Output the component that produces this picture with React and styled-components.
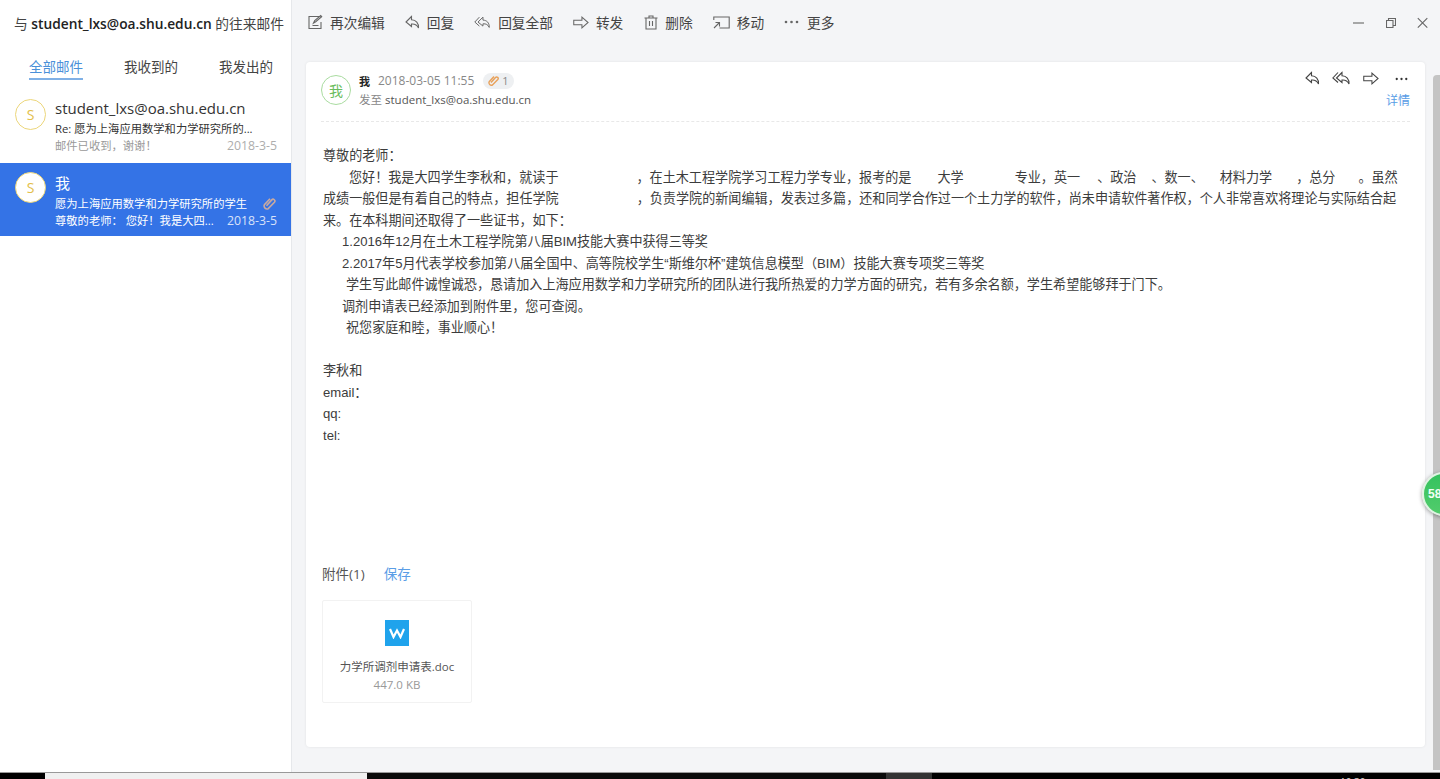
import styled, { createGlobalStyle } from "styled-components";

const GlobalStyle = createGlobalStyle`
    html, body {
        margin: 0;
        padding: 0;
        height: 100%;
        overflow: hidden;
        background: #f4f5f7;
    }
    body {
        font-family: "Open Sans", "Noto Sans CJK SC", sans-serif;
        color: #333;
    }
    * {
        box-sizing: border-box;
    }
`;

const Page = styled.div`
    position: relative;
    display: flex;
    flex-direction: column;
    width: 1440px;
    height: 779px;
    overflow: hidden;
`;

const Win = styled.div`
    display: flex;
    height: 772px;
`;

/* left column */
const Sidebar = styled.aside`
    width: 292px;
    flex-shrink: 0;
    background: #fff;
    border-right: 1px solid #e6e8eb;
`;

const SideTitle = styled.div`
    height: 46px;
    padding-left: 14px;
    display: flex;
    align-items: center;
    font-size: 13.75px;
    color: #444;
    white-space: pre;
    b {
        font-weight: 600;
        color: #222;
    }
`;

const Tabs = styled.div`
    display: flex;
    height: 44px;
    padding: 11px 0 0 29px;
    gap: 41px;
`;

const Tab = styled.div`
    height: 23px;
    font-size: 13.5px;
    line-height: 20px;
    color: ${(p) => (p.$active ? "#4a90d9" : "#444")};
    border-bottom: ${(p) => (p.$active ? "2px solid #7fb0e6" : "none")};
`;

const MailItem = styled.div`
    display: flex;
    height: 73px;
    padding: ${(p) => (p.$active ? "10px" : "8px")} 14px 0 15px;
    gap: 9px;
    background: ${(p) => (p.$active ? "#3473e6" : "#fff")};
    color: ${(p) => (p.$active ? "#fff" : "#333")};
`;

const SideAvatar = styled.div`
    width: 31px;
    height: 31px;
    margin-top: ${(p) => (p.$active ? "-1px" : "1px")};
    border-radius: 50%;
    border: 1px solid #ecd67a;
    background: #fff;
    color: #e3be4a;
    font-size: 14px;
    display: flex;
    align-items: center;
    justify-content: center;
    flex-shrink: 0;
`;

const MailText = styled.div`
    flex: 1;
    min-width: 0;
`;

const MailName = styled.div`
    height: 22px;
    font-size: 15px;
    line-height: 20px;
    white-space: nowrap;
`;

const MailRow = styled.div`
    display: flex;
    justify-content: space-between;
    align-items: center;
    height: 17px;
    font-size: 11.3px;
    line-height: 16px;
    white-space: nowrap;
    color: ${(p) => p.$color || "inherit"};
`;

const MailDate = styled.span`
    font-size: 12.3px;
    opacity: 0.8;
`;

/* right column */
const Main = styled.main`
    flex: 1;
    min-width: 0;
    display: flex;
    flex-direction: column;
`;

const Toolbar = styled.div`
    display: flex;
    align-items: flex-start;
    height: 62px;
    padding: 13px 12px 0 16px;
`;

const Actions = styled.div`
    display: flex;
    gap: 20px;
    flex: 1;
`;

const Action = styled.div`
    display: flex;
    align-items: center;
    gap: 7px;
    height: 18px;
    font-size: 13.7px;
    color: #444;
    white-space: nowrap;
    &:nth-child(5) {
        margin-left: 1px;
    }
    &:last-child {
        gap: 8px;
    }
`;

const WinControls = styled.div`
    display: flex;
    gap: 21px;
    padding-top: 3px;
`;

const Icon = styled.svg`
    display: block;
    flex-shrink: 0;
    fill: none;
    stroke: ${(p) => p.$stroke || "#666"};
    stroke-width: ${(p) => p.$weight || 1.1};
`;

const ContentRow = styled.div`
    display: flex;
    padding-left: 14px;
    gap: 8px;
    flex: 1;
`;

const Card = styled.section`
    flex: 1;
    height: 685px;
    padding: 0 15px;
    background: #fff;
    border-radius: 4px;
    box-shadow: 0 0 3px rgba(0, 0, 0, 0.08);
`;

const ScrollThumb = styled.div`
    width: 7px;
    height: 695px;
    margin-top: 13px;
    background: #c4c4c4;
    border-radius: 4px 0 0 0;
`;

const CardHead = styled.header`
    display: flex;
    height: 60px;
    padding-top: 10px;
    border-bottom: 1px dashed #e8e8e8;
`;

const BigAvatar = styled.div`
    width: 30px;
    height: 30px;
    margin-top: 3px;
    margin-right: 8px;
    border-radius: 50%;
    border: 1px solid #a9dca0;
    color: #6bbd5e;
    font-size: 14px;
    display: flex;
    align-items: center;
    justify-content: center;
    flex-shrink: 0;
`;

const HeadText = styled.div`
    flex: 1;
`;

const HeadLine = styled.div`
    display: flex;
    align-items: center;
    height: ${(p) => p.$h};
    font-size: ${(p) => p.$size};
    color: #888;
    white-space: nowrap;
`;

const Sender = styled.b`
    font-size: 11px;
    color: #222;
    margin-right: 8px;
`;

const Badge = styled.span`
    display: flex;
    align-items: center;
    gap: 2px;
    height: 16px;
    width: 31px;
    margin-left: 9px;
    padding-left: 5px;
    border-radius: 8px;
    background: #eef0f2;
    font-size: 11px;
    color: #888;
`;

const Address = styled.span`
    color: #555;
    margin-left: 3px;
`;

const HeadRight = styled.div`
    display: flex;
    flex-direction: column;
    align-items: flex-end;
`;

const HeadIcons = styled.div`
    display: flex;
    align-items: center;
    gap: 12px;
    height: 13px;
    & > :last-child {
        margin: 0 2px 0 4px;
    }
`;

const DetailLink = styled.a`
    margin-top: 8px;
    font-size: 12px;
    line-height: 16px;
    color: #5a9de6;
`;

const Letter = styled.article`
    padding: 23px 0 0 2px;
    height: 434px;
    font-family: "Liberation Sans", "Noto Sans CJK SC", sans-serif;
    font-size: 13.1px;
    line-height: 21.54px;
    color: #3c3c3c;
`;

const Line = styled.div`
    height: 21.54px;
    padding-left: ${(p) => p.$indent || 0}px;
    white-space: nowrap;
`;

const Blank = styled.span`
    display: inline-block;
    width: ${(p) => p.$w}px;
`;

const AttachHead = styled.div`
    display: flex;
    gap: 19px;
    height: 44px;
    padding: 8px 0 0 1px;
    font-size: 13.5px;
    line-height: 20px;
    color: #555;
`;

const SaveLink = styled.a`
    color: #5a9de6;
`;

const AttachCard = styled.div`
    width: 150px;
    height: 103px;
    margin-left: 1px;
    padding-top: 19px;
    display: flex;
    flex-direction: column;
    align-items: center;
    border: 1px solid #f2f2f2;
    border-radius: 2px;
`;

const WordIcon = styled.div`
    width: 24px;
    height: 26px;
    margin-bottom: 12px;
    background: #1fa3ec;
    display: flex;
    align-items: center;
    justify-content: center;
`;

const FileName = styled.div`
    font-size: 11.5px;
    line-height: 18px;
    color: #555;
`;

const FileSize = styled.div`
    font-size: 11.5px;
    line-height: 18px;
    color: #999;
`;

const Taskbar = styled.footer`
    display: flex;
    height: 7px;
    overflow: hidden;
    background: #000;
    border-top: 1px solid #999;
`;

const TaskSlot = styled.div`
    width: ${(p) => p.$w}px;
    background: ${(p) => p.$bg || "transparent"};
    flex-shrink: 0;
`;

const Clock = styled.div`
    width: 30px;
    flex-shrink: 0;
    padding-top: 3px;
    font-size: 10px;
    line-height: 12px;
    color: #ddd;
`;

const FloatBall = styled.div`
    position: absolute;
    left: 1422px;
    top: 472px;
    width: 44px;
    height: 44px;
    padding-left: 4px;
    border-radius: 50%;
    border: 2px solid #dff3e2;
    background: linear-gradient(#35c25e, #52cc6c);
    box-shadow: 0 1px 4px rgba(0, 0, 0, 0.4);
    display: flex;
    align-items: center;
    font-family: "Liberation Sans", sans-serif;
    font-size: 12px;
    font-weight: 700;
    color: #f2fff4;
`;

const EditIcon = () => (
    <Icon width="15" height="16" viewBox="0 0 15 16">
        <path d="M11.5 2.500H1v12h12V8" />
        <path d="M4.500 11.500h6M5.500 9l1.200-2.500 6-5 1 1.200-6 5z" />
    </Icon>
);

const ReplyIcon = ({ stroke, weight }) => (
    <Icon $stroke={stroke} $weight={weight} width="15" height="15" viewBox="0 0 15 15">
        <path d="M6.500 1.500 1 7l5.500 4.500V9c3.500-.3 5.500.8 7 4 .3-5-2.500-8-7-8.200z" />
    </Icon>
);

const ReplyAllIcon = ({ stroke, weight, width = 17 }) => (
    <Icon $stroke={stroke} $weight={weight} width={width} height="15" viewBox="0 0 19 15">
        <path d="M6 1.500.9 7 6 11.500" />
        <path d="M10 1.500 4.500 7 10 11.500V9c3.500-.3 5.500.8 7 4 .3-5-2.500-8-7-8.200z" />
    </Icon>
);

const ForwardIcon = ({ stroke, weight }) => (
    <Icon $stroke={stroke} $weight={weight} width="16" height="15" viewBox="0 0 17 15">
        <path d="M.8 5h8.700V1.800l6.500 5.700-6.500 5.700V10H.8z" />
    </Icon>
);

const TrashIcon = () => (
    <Icon width="14" height="15" viewBox="0 0 14 15">
        <path d="M.5 3h13M5 3V1h4v2M2 3v11h10V3M5.500 6v5M8.500 6v5" />
    </Icon>
);

const MoveIcon = () => (
    <Icon width="17" height="15" viewBox="0 0 17 15">
        <path d="M.8 5V2h15.400v11H6.500" />
        <path d="M1 13l5-5M2.500 7.500H6.500v4" />
    </Icon>
);

const DotsIcon = ({ fill = "#666", width = 15 }) => (
    <svg width={width} height="4" viewBox="0 0 15 4" fill={fill}>
        <circle cx="2" cy="2" r="1.300" />
        <circle cx="7.500" cy="2" r="1.300" />
        <circle cx="13" cy="2" r="1.300" />
    </svg>
);

const ClipIcon = ({ color, size = 12 }) => (
    <Icon $stroke={color} $weight={1.4} width={size} height={size} viewBox="0 0 12 12">
        <path d="M3 7.500 7.500 2.500a1.500 1.500 0 0 1 2.300 2L4.500 10a2.500 2.500 0 0 1-3.300-3.300L6 1.500" />
    </Icon>
);

const toolbarItems = [
    [<EditIcon key="e" />, "再次编辑"],
    [<ReplyIcon key="r" />, "回复"],
    [<ReplyAllIcon key="ra" />, "回复全部"],
    [<ForwardIcon key="f" />, "转发"],
    [<TrashIcon key="t" />, "删除"],
    [<MoveIcon key="m" />, "移动"],
    [<DotsIcon key="d" />, "更多"],
];

function App() {
    return (
        <Page>
            <GlobalStyle />
            <Win>
                <Sidebar>
                    <SideTitle>
                        与 <b>student_lxs@oa.shu.edu.cn</b> 的往来邮件
                    </SideTitle>
                    <Tabs>
                        <Tab $active>全部邮件</Tab>
                        <Tab>我收到的</Tab>
                        <Tab>我发出的</Tab>
                    </Tabs>
                    <MailItem>
                        <SideAvatar>S</SideAvatar>
                        <MailText>
                            <MailName>student_lxs@oa.shu.edu.cn</MailName>
                            <MailRow>Re: 愿为上海应用数学和力学研究所的...</MailRow>
                            <MailRow $color="#999">
                                邮件已收到，谢谢！
                                <MailDate>2018-3-5</MailDate>
                            </MailRow>
                        </MailText>
                    </MailItem>
                    <MailItem $active>
                        <SideAvatar $active>S</SideAvatar>
                        <MailText>
                            <MailName>我</MailName>
                            <MailRow>
                                愿为上海应用数学和力学研究所的学生
                                <ClipIcon color="#c9a9a0" size={14} />
                            </MailRow>
                            <MailRow>
                                尊敬的老师： 您好！我是大四...
                                <MailDate>2018-3-5</MailDate>
                            </MailRow>
                        </MailText>
                    </MailItem>
                </Sidebar>
                <Main>
                    <Toolbar>
                        <Actions>
                            {toolbarItems.map(([icon, label]) => (
                                <Action key={label}>
                                    {icon}
                                    {label}
                                </Action>
                            ))}
                        </Actions>
                        <WinControls>
                            <Icon width="12" height="14" viewBox="0 0 12 14">
                                <path d="M0 7h11" />
                            </Icon>
                            <Icon width="10" height="14" viewBox="0 0 10 14">
                                <path d="M.5 4.500h6.500v7H.5zM2.500 4.500v-2h7v7H7" />
                            </Icon>
                            <Icon width="11" height="14" viewBox="0 0 11 14">
                                <path d="m.8 2.200 9.500 9.500M10.300 2.200.8 11.700" />
                            </Icon>
                        </WinControls>
                    </Toolbar>
                    <ContentRow>
                        <Card>
                            <CardHead>
                                <BigAvatar>我</BigAvatar>
                                <HeadText>
                                    <HeadLine $h="17px" $size="12px">
                                        <Sender>我</Sender>
                                        2018-03-05 11:55
                                        <Badge>
                                            <ClipIcon color="#e8a15a" />1
                                        </Badge>
                                    </HeadLine>
                                    <HeadLine $h="20px" $size="11.5px">
                                        发至<Address>student_lxs@oa.shu.edu.cn</Address>
                                    </HeadLine>
                                </HeadText>
                                <HeadRight>
                                    <HeadIcons>
                                        <ReplyIcon stroke="#444" />
                                        <ReplyAllIcon stroke="#444" width={19} />
                                        <ForwardIcon stroke="#444" />
                                        <DotsIcon fill="#333" width={13} />
                                    </HeadIcons>
                                    <DetailLink>详情</DetailLink>
                                </HeadRight>
                            </CardHead>
                            <Letter>
                                <Line>尊敬的老师：</Line>
                                <Line $indent={26}>
                                    您好！我是大四学生李秋和，就读于
                                    <Blank $w={78} />
                                    ，在土木工程学院学习工程力学专业，报考的是
                                    <Blank $w={26} />
                                    大学
                                    <Blank $w={51} />
                                    专业，英一
                                    <Blank $w={17} />
                                    、政治
                                    <Blank $w={15} />
                                    、数一、
                                    <Blank $w={16} />
                                    材料力学
                                    <Blank $w={24} />
                                    ，总分
                                    <Blank $w={23} />
                                    。虽然
                                </Line>
                                <Line>
                                    成绩一般但是有着自己的特点，担任学院
                                    <Blank $w={78} />
                                    ，负责学院的新闻编辑，发表过多篇，还和同学合作过一个土力学的软件，尚未申请软件著作权，个人非常喜欢将理论与实际结合起
                                </Line>
                                <Line>来。在本科期间还取得了一些证书，如下：</Line>
                                <Line $indent={19}>1.2016年12月在土木工程学院第八届BIM技能大赛中获得三等奖</Line>
                                <Line $indent={19}>2.2017年5月代表学校参加第八届全国中、高等院校学生“斯维尔杯”建筑信息模型（BIM）技能大赛专项奖三等奖</Line>
                                <Line $indent={23}>学生写此邮件诚惶诚恐，恳请加入上海应用数学和力学研究所的团队进行我所热爱的力学方面的研究，若有多余名额，学生希望能够拜于门下。</Line>
                                <Line $indent={19}>调剂申请表已经添加到附件里，您可查阅。</Line>
                                <Line $indent={23}>祝您家庭和睦，事业顺心！</Line>
                                <Line />
                                <Line>李秋和</Line>
                                <Line>email：</Line>
                                <Line>qq:</Line>
                                <Line>tel:</Line>
                            </Letter>
                            <AttachHead>
                                <span>附件(1)</span>
                                <SaveLink>保存</SaveLink>
                            </AttachHead>
                            <AttachCard>
                                <WordIcon>
                                    <svg width="16" height="11" viewBox="0 0 16 11" fill="none" stroke="#fff" strokeWidth="2.200">
                                        <path d="m1 1 3.500 8L8 2.500 11.500 9 15 1" />
                                    </svg>
                                </WordIcon>
                                <FileName>力学所调剂申请表.doc</FileName>
                                <FileSize>447.0 KB</FileSize>
                            </AttachCard>
                        </Card>
                        <ScrollThumb />
                    </ContentRow>
                </Main>
            </Win>
            <Taskbar>
                <TaskSlot $w={45} />
                <TaskSlot $w={322} $bg="#f0f0f0" />
                <TaskSlot $w={519} $bg="#0a0a0a" />
                <TaskSlot $w={46} $bg="#333" />
                <TaskSlot $w={408} />
                <Clock>10:30</Clock>
            </Taskbar>
            <FloatBall>58</FloatBall>
        </Page>
    );
}

export default App;
